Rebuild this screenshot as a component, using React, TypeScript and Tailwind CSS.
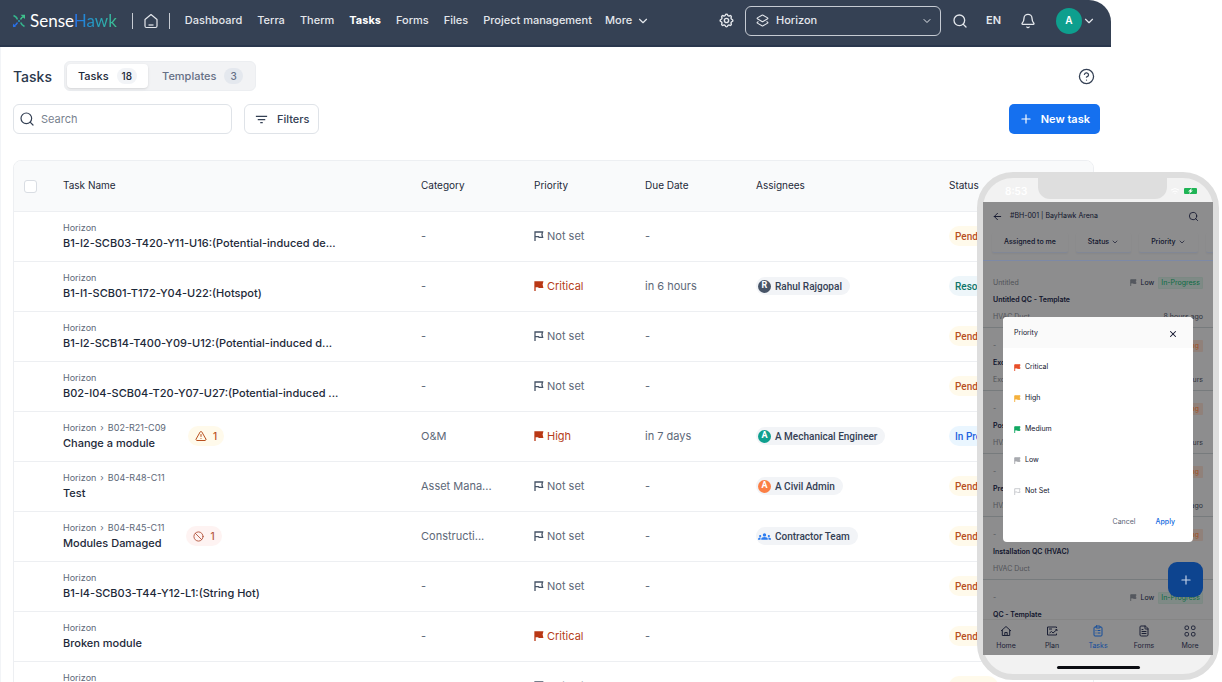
import { Fragment, ReactNode, useState } from 'react';
import {
  ArrowLeft,
  Ban,
  Bell,
  ChevronDown,
  CircleHelp,
  ClipboardList,
  FileText,
  Layers2,
  Plus,
  Search,
  TriangleAlert,
  X,
} from 'lucide-react';
import { MdFilterList, MdGroups } from 'react-icons/md';
import { TbSettings } from 'react-icons/tb';

type Status = 'Pending' | 'Resolved' | 'In Progress';
type Priority = 'Not set' | 'Critical' | 'High';

type Task = {
  id: number;
  path: string[];
  name: string;
  category?: string;
  priority: Priority;
  due?: string;
  assignee?: { name: string; color?: string };
  status: Status;
  alert?: 'warning' | 'blocked';
};

const TASKS: Task[] = [
  {
    id: 1,
    path: ['Horizon'],
    name: 'B1-I2-SCB03-T420-Y11-U16:(Potential-induced de...',
    priority: 'Not set',
    status: 'Pending',
  },
  {
    id: 2,
    path: ['Horizon'],
    name: 'B1-I1-SCB01-T172-Y04-U22:(Hotspot)',
    priority: 'Critical',
    due: 'in 6 hours',
    assignee: { name: 'Rahul Rajgopal', color: 'bg-[#475467]' },
    status: 'Resolved',
  },
  {
    id: 3,
    path: ['Horizon'],
    name: 'B1-I2-SCB14-T400-Y09-U12:(Potential-induced d...',
    priority: 'Not set',
    status: 'Pending',
  },
  {
    id: 4,
    path: ['Horizon'],
    name: 'B02-I04-SCB04-T20-Y07-U27:(Potential-induced ...',
    priority: 'Not set',
    status: 'Pending',
  },
  {
    id: 5,
    path: ['Horizon', 'B02-R21-C09'],
    name: 'Change a module',
    category: 'O&M',
    priority: 'High',
    due: 'in 7 days',
    assignee: { name: 'A Mechanical Engineer', color: 'bg-[#0e9f8e]' },
    status: 'In Progress',
    alert: 'warning',
  },
  {
    id: 6,
    path: ['Horizon', 'B04-R48-C11'],
    name: 'Test',
    category: 'Asset Mana...',
    priority: 'Not set',
    assignee: { name: 'A Civil Admin', color: 'bg-[#fb7f45]' },
    status: 'Pending',
  },
  {
    id: 7,
    path: ['Horizon', 'B04-R45-C11'],
    name: 'Modules Damaged',
    category: 'Constructi...',
    priority: 'Not set',
    assignee: { name: 'Contractor Team' },
    status: 'Pending',
    alert: 'blocked',
  },
  {
    id: 8,
    path: ['Horizon'],
    name: 'B1-I4-SCB03-T44-Y12-L1:(String Hot)',
    priority: 'Not set',
    status: 'Pending',
  },
  { id: 9, path: ['Horizon'], name: 'Broken module', priority: 'Critical', status: 'Pending' },
  { id: 10, path: ['Horizon'], name: 'Inspection', priority: 'Not set', status: 'Pending' },
];

const NAV = ['Dashboard', 'Terra', 'Therm', 'Tasks', 'Forms', 'Files', 'Project management'];

const STATUS_STYLES: Record<Status, string> = {
  Pending: 'bg-[#fffaeb] text-[#b9501f]',
  Resolved: 'bg-[#eef6fa] text-[#107569]',
  'In Progress': 'bg-[#eaf6ff] text-[#1d62e0]',
};

const MOBILE_TASKS = [
  { id: 1, path: 'Untitled', name: 'Untitled QC - Template', form: 'HVAC Duct', time: '8 hours ago', low: true },
  { id: 2, path: '-', name: 'Excavation', form: 'Excavation', time: 'in 8 hours' },
  { id: 3, path: '-', name: 'Post Installation', form: 'HVAC Duct', time: 'in 8 hours' },
  { id: 4, path: '-', name: 'Pre Installation', form: 'HVAC Duct', time: '1 day ago' },
  { id: 5, path: '-', name: 'Installation QC (HVAC)', form: 'HVAC Duct', time: '' },
  { id: 6, path: '-', name: 'QC - Template', form: '', time: '', low: true },
];

const PRIORITY_OPTIONS = [
  { label: 'Critical', color: 'text-[#e8502a]', filled: true },
  { label: 'High', color: 'text-[#f5b13d]', filled: true },
  { label: 'Medium', color: 'text-[#12a862]', filled: true },
  { label: 'Low', color: 'text-[#a9abb0]', filled: true },
  { label: 'Not Set', color: 'text-[#c5c7cb]', filled: false },
];

export default function App() {
  return (
    <div className="relative h-screen overflow-hidden bg-white font-['Inter','Noto_Sans',sans-serif] text-[#344054]">
      <div className="mr-[111px] flex flex-col">
        <TopBar />
        <main className="flex flex-col border-l border-[#f2f4f7] pt-[14px] pr-[11px] pl-3">
          <PageHeader />
          <Toolbar />
          <TaskTable />
        </main>
      </div>
      <Phone />
    </div>
  );
}

function TopBar() {
  return (
    <header className="flex h-[47px] items-center rounded-tr-[22px] border-b-2 border-[#2a374d] bg-[#354154] pr-[15px] pb-1 pl-3 text-[11px] font-medium text-[#e4e7ec]">
      <a href="#" className="flex items-center gap-1" aria-label="SenseHawk">
        <LogoMark />
        <span className="font-['Lato',sans-serif] text-[17px] leading-5 font-normal text-white">
          Sense
          <span className="bg-linear-to-r from-[#2970e8] to-[#3fc08c] bg-clip-text text-transparent">
            Hawk
          </span>
        </span>
      </a>
      <div className="ml-[15px] flex items-center gap-[11px]">
        <span className="h-4 w-px bg-[#c6cbd3]" />
        <a href="#" aria-label="Home">
          <HomeIcon />
        </a>
        <span className="h-4 w-px bg-[#c6cbd3]" />
      </div>
      <nav className="ml-[15px] flex items-center gap-[15px] whitespace-nowrap">
        {NAV.map((item) => (
          <a key={item} href="#" className={item === 'Tasks' ? 'font-bold text-white' : ''}>
            {item}
          </a>
        ))}
        <button className="-ml-[2px] flex items-center gap-1">
          More
          <ChevronDown size={14} />
        </button>
      </nav>

      <div className="ml-auto flex items-center">
        <button aria-label="Settings">
          <TbSettings size={17} strokeWidth={2} />
        </button>
        <div className="relative ml-[10px] flex h-[30px] w-[196px] items-center rounded-md border border-[#c6cbd3] pl-[10px]">
          <Layers2 size={13} />
          <select
            aria-label="Project"
            className="h-full flex-1 appearance-none bg-transparent pl-[7px] text-[11px] outline-none"
          >
            <option>Horizon</option>
          </select>
          <ChevronDown size={12} className="pointer-events-none absolute right-[7px]" />
        </div>
        <button className="ml-[11px]" aria-label="Search">
          <Search size={16} />
        </button>
        <button className="ml-[18px] text-[11px] font-semibold">EN</button>
        <button className="ml-[19px]" aria-label="Notifications">
          <Bell size={16} />
        </button>
        <button className="ml-5 flex items-center" aria-label="Account">
          <span className="flex size-[26px] items-center justify-center rounded-full bg-[#0e9f8e] text-[10px] font-semibold text-white">
            A
          </span>
          <ChevronDown size={14} />
        </button>
      </div>
    </header>
  );
}

function PageHeader() {
  return (
    <div className="flex items-center">
      <h1 className="text-[14px] font-medium text-[#2b384c]">Tasks</h1>
      <div className="ml-3 flex rounded-md border border-[#eceef1] bg-[#f2f3f5] p-[2px] text-[11px] font-medium">
        <button className="flex h-6 items-center gap-2 rounded-sm bg-white px-[11px] text-[#1d2939] shadow-sm">
          Tasks
          <span className="flex h-4 items-center rounded-full bg-[#f2f4f7] px-[5px] text-[10px]">18</span>
        </button>
        <button className="flex h-6 items-center gap-2 pr-[10px] pl-[14px] text-[#667085]">
          Templates
          <span className="flex h-4 items-center rounded-full bg-[#e4e8ee] px-[6px] text-[10px]">3</span>
        </button>
      </div>
      <button className="mr-[5px] ml-auto" aria-label="Help">
        <CircleHelp size={17} strokeWidth={1.8} />
      </button>
    </div>
  );
}

function Toolbar() {
  return (
    <div className="mt-[13px] flex items-center gap-3">
      <label className="flex h-[30px] w-[219px] items-center gap-[6px] rounded-md border border-[#dfe3e8] pl-[5px]">
        <Search size={16} strokeWidth={1.8} />
        <input
          type="text"
          aria-label="Search tasks"
          placeholder="Search"
          className="min-w-0 flex-1 text-[11px] outline-none placeholder:text-[#79828f]"
        />
      </label>
      <button className="flex h-[30px] items-center gap-2 rounded-md border border-[#dfe3e8] px-[9px] text-[11px] font-medium">
        <MdFilterList size={15} />
        Filters
      </button>
      <button className="ml-auto flex h-[30px] items-center gap-2 rounded-[5px] bg-[#1570ef] px-[10px] text-[11px] font-semibold text-white">
        <Plus size={14} />
        New task
      </button>
    </div>
  );
}

function TaskTable() {
  return (
    <div className="mt-[26px] mr-[6px] overflow-hidden rounded-t-lg border border-[#edeff2]">
      <table className="w-full table-fixed border-collapse text-left whitespace-nowrap">
        <colgroup>
          <col className="w-[49px]" />
          <col className="w-[358px]" />
          <col className="w-[113px]" />
          <col className="w-[111px]" />
          <col className="w-[111px]" />
          <col className="w-[193px]" />
          <col />
        </colgroup>
        <thead>
          <tr className="h-[50px] border-b border-[#edeff2] bg-[#f9fafb] text-[10px] text-[#1d2939]">
            <th className="pt-[2px] pl-[10px]">
              <input
                type="checkbox"
                aria-label="Select all"
                className="block size-[13px] appearance-none rounded-[3px] border border-[#d9dde3] bg-white"
              />
            </th>
            <th className="font-normal">Task Name</th>
            <th className="font-normal">Category</th>
            <th className="font-normal">Priority</th>
            <th className="font-normal">Due Date</th>
            <th className="font-normal">Assignees</th>
            <th className="font-normal">Status</th>
          </tr>
        </thead>
        <tbody>
          {TASKS.map((task) => (
            <TaskRow key={task.id} task={task} />
          ))}
        </tbody>
      </table>
    </div>
  );
}

function TaskRow({ task }: { task: Task }) {
  return (
    <tr className="h-[50px] border-b border-[#edeff2] text-[11px] text-[#5d6878]">
      <td />
      <td>
        <div className="flex items-center gap-[22px]">
          <div className="flex flex-col pb-[2px]">
            <span className="text-[9px] leading-[15px]">
              {task.path.map((part, index) => (
                <Fragment key={part}>
                  {index > 0 && <span className="mx-1">›</span>}
                  {part}
                </Fragment>
              ))}
            </span>
            <span className="leading-4 font-medium text-[#1d2939]">{task.name}</span>
          </div>
          {task.alert === 'warning' && (
            <Pill className="bg-[#fffaeb] text-[#b9501f]">
              <TriangleAlert size={12} />1
            </Pill>
          )}
          {task.alert === 'blocked' && (
            <Pill className="bg-[#fef3f2] text-[#b5573f]">
              <Ban size={11} />1
            </Pill>
          )}
        </div>
      </td>
      <td>{task.category || '-'}</td>
      <td>
        <span
          className={`flex items-center gap-[3px] ${task.priority === 'Not set' ? '' : 'text-[#b5401a]'}`}
        >
          <Flag
            size={10}
            filled={task.priority !== 'Not set'}
            className={task.priority === 'Not set' ? 'text-[#475467]' : 'text-[#b93815]'}
          />
          {task.priority}
        </span>
      </td>
      <td>{task.due || '-'}</td>
      <td>
        {task.assignee && (
          <span className="inline-flex h-[18px] items-center gap-1 rounded-full bg-[#f2f4f7] pr-2 pl-[2px] align-middle font-['Roboto',sans-serif] text-[10px] font-medium text-[#344054]">
            {task.assignee.color ? (
              <span
                className={`flex size-[13px] items-center justify-center rounded-full text-[9px] font-bold text-white ${task.assignee.color}`}
              >
                {task.assignee.name[0]}
              </span>
            ) : (
              <MdGroups size={13} className="text-[#2e7df0]" />
            )}
            {task.assignee.name}
          </span>
        )}
      </td>
      <td>
        <span
          className={`inline-flex h-5 items-center rounded-full px-[6px] align-middle font-['Roboto',sans-serif] text-[10px] font-medium ${STATUS_STYLES[task.status]}`}
        >
          {task.status}
        </span>
      </td>
    </tr>
  );
}

function Pill({ children, className }: { children: ReactNode; className: string }) {
  return (
    <span
      className={`flex h-5 items-center gap-[6px] rounded-full px-[7px] text-[10px] font-medium ${className}`}
    >
      {children}
    </span>
  );
}

// Mobile app preview that floats over the desktop page
function Phone() {
  return (
    <div className="absolute top-[172px] right-[3px] flex w-[242px] flex-col rounded-[36px] border-[6px] border-[#dedede] bg-[#f2f2f2] text-[7px] text-[#10142c]">
      <div className="flex h-6 items-center justify-between pt-[2px] pr-4 pl-[22px] font-semibold text-white">
        <span className="text-[10px] leading-[10px]">8:53</span>
        <span className="flex items-center gap-1">
          <svg width="22" height="8" viewBox="0 0 22 8" fill="none" stroke="#fff">
            <path d="M1 7V5M3 7V4M5 7V2" />
            <path d="M13 3q4-3 8 0M14.500 5q2.500-2 5 0M17 7v-1" />
          </svg>
          <svg width="13" height="6" viewBox="0 0 13 6">
            <rect width="13" height="6" rx="1" fill="#1fb455" />
            <path d="M8 0 4 3.500H6L5 6 9 2.500H7z" fill="#fff" />
          </svg>
        </span>
      </div>
      <div className="absolute -top-px left-[55px] h-[22px] w-[129px] rounded-b-xl bg-[#dedede]" />

      <div className="relative flex h-[453px] flex-col overflow-hidden bg-[#8d8d8e]">
        <div className="flex h-[27px] items-center px-[9px] pt-px">
          <button aria-label="Back">
            <ArrowLeft size={11} />
          </button>
          <span className="ml-[7px]">#BH-001 | BayHawk Arena</span>
          <button className="mr-[5px] ml-auto" aria-label="Search">
            <Search size={11} strokeWidth={1.8} />
          </button>
        </div>
        <div className="flex h-8 items-center gap-2 border-b border-[#7d89a6] px-[9px] pb-1 font-medium whitespace-nowrap">
          <MobileChip>Assigned to me</MobileChip>
          <MobileChip arrow>Status</MobileChip>
          <MobileChip arrow>Priority</MobileChip>
          <MobileChip arrow>Due Date</MobileChip>
        </div>
        <ul className="mt-1 flex min-h-0 flex-1 flex-col overflow-hidden">
          {MOBILE_TASKS.map((task) => (
            <MobileTask key={task.id} task={task} />
          ))}
        </ul>
        <nav className="flex h-9 items-center border-t border-[#858585] leading-[9px]">
          <MobileTab label="Home">
            <HomeTabIcon />
          </MobileTab>
          <MobileTab label="Plan">
            <PlanIcon />
          </MobileTab>
          <MobileTab label="Tasks" active>
            <ClipboardList size={12} />
          </MobileTab>
          <MobileTab label="Forms">
            <FileText size={12} />
          </MobileTab>
          <MobileTab label="More">
            <DotsIcon />
          </MobileTab>
        </nav>
        <button
          className="absolute right-[10px] bottom-[58px] flex size-[35px] items-center justify-center rounded-[9px] bg-[#0d448f] text-[#c5d3e8]"
          aria-label="Add task"
        >
          <Plus size={14} />
        </button>
        <PriorityDialog />
      </div>

      <div className="flex h-[19px] items-center justify-center pt-[6px]">
        <span className="h-[3px] w-[83px] rounded-full bg-[#0b0d12]" />
      </div>
    </div>
  );
}

function MobileChip({ children, arrow }: { children: ReactNode; arrow?: boolean }) {
  return (
    <button className="flex h-5 shrink-0 items-center gap-[2px] rounded-[2px] border-b border-[#818795] px-3 shadow-xs">
      {children}
      {arrow && <ChevronDown size={8} />}
    </button>
  );
}

function MobileTask({ task }: { task: (typeof MOBILE_TASKS)[number] }) {
  return (
    <li className="flex h-[63px] shrink-0 flex-col border-b border-[#777b7d] px-[10px] pt-[9px] leading-[17px]">
      <div className="flex items-center text-[#505257]">
        {task.path}
        {task.low ? (
          <span className="ml-auto flex items-center gap-1 text-[#10142c]">
            <Flag size={7} filled className="text-[#55585f]" />
            Low
            <span className="rounded-[1px] border border-[#7b8983] bg-[#7f8a86] px-[2px] leading-[10px] text-[#0a6a42]">
              In-Progress
            </span>
          </span>
        ) : (
          <span className="ml-auto rounded-[1px] bg-[#90817a] px-[4px] leading-3 text-[#a04f1e]">
            Pending
          </span>
        )}
      </div>
      <div className="font-semibold">{task.name}</div>
      <div className="flex justify-between text-[#505257]">
        {task.form}
        <span className="text-[#2c2f3a]">{task.time}</span>
      </div>
    </li>
  );
}

function MobileTab({
  children,
  label,
  active,
}: {
  children: ReactNode;
  label: string;
  active?: boolean;
}) {
  return (
    <button
      className={`flex flex-1 flex-col items-center gap-1 ${active ? 'text-[#124c9c]' : 'text-[#1c2136]'}`}
    >
      {children}
      {label}
    </button>
  );
}

function PriorityDialog() {
  const [selected, setSelected] = useState('');

  return (
    <div
      role="dialog"
      aria-label="Priority"
      className="absolute inset-x-5 top-[115px] flex flex-col overflow-hidden rounded-sm bg-white"
    >
      <div className="flex h-[31px] items-center justify-between bg-[#fafafa] pt-[2px] pr-[15px] pl-[11px]">
        Priority
        <button aria-label="Close">
          <X size={10} strokeWidth={2.5} />
        </button>
      </div>
      <div className="mt-1 flex flex-col">
        {PRIORITY_OPTIONS.map((option) => (
          <button
            key={option.label}
            className={`flex h-[31px] items-center gap-1 pl-[11px] ${
              selected === option.label ? 'bg-gray-100' : ''
            }`}
            onClick={() => setSelected(option.label)}
          >
            <Flag size={7} filled={option.filled} className={option.color} />
            {option.label}
          </button>
        ))}
      </div>
      <div className="flex h-[35px] items-center justify-end gap-5 pr-[18px] pb-1">
        <button className="text-[#5b6475]">Cancel</button>
        <button className="font-medium text-[#0f6ae0]">Apply</button>
      </div>
    </div>
  );
}

function Flag({ size, filled, className }: { size: number; filled?: boolean; className: string }) {
  return (
    <svg
      width={size}
      height={size}
      viewBox="0 0 10 10"
      fill={filled ? 'currentColor' : 'none'}
      stroke="currentColor"
      strokeWidth="1.3"
      className={className}
    >
      <path d="M1 10V1H8.600L7.900 3.500L8.600 6.300H5L4.500 5.700H1" />
    </svg>
  );
}

function LogoMark() {
  return (
    <svg width="14" height="14" viewBox="0 0 14 14" fill="none" strokeWidth="1.6">
      <path d="M1.500 1.500Q5 3 5.300 5.500M8.700 8.500Q9.500 11 12.500 12.500" stroke="#35b58d" />
      <path d="M1 12.500Q4.500 11 5.500 8.500" stroke="#2970e8" />
      <path d="M8.500 5.500Q9.500 3 12 2.500" stroke="#3fc08c" />
      <path d="M8.500 .800H13V5z" fill="#3fc08c" />
      <path d="M1 9.500V13H4z" fill="#2970e8" />
      <circle cx="7" cy="7" r="1" fill="#2f9bb8" />
    </svg>
  );
}

function HomeIcon() {
  return (
    <svg width="14" height="16" viewBox="0 0 14 16" fill="none" stroke="currentColor" strokeWidth="1.2">
      <path d="M1 6.500 7 1.500 13 6.500V13Q13 14.500 11.500 14.500H2.500Q1 14.500 1 13Z" strokeLinejoin="round" />
      <path d="M4.500 12H9.500" />
    </svg>
  );
}

function HomeTabIcon() {
  return (
    <svg width="12" height="12" viewBox="0 0 12 12" fill="none" stroke="currentColor">
      <path d="M1 6 6 1.500 11 6M2.300 5V10.500H9.700V5M4.800 10.500V7.500H7.200V10.500" />
    </svg>
  );
}

function PlanIcon() {
  return (
    <svg width="12" height="12" viewBox="0 0 12 12" fill="none" stroke="currentColor">
      <path d="M10.500 3V2H1.500V10H10.500V8.500M3 4H6M3.500 8 5.500 6.500 7 8 11 4.500M9.500 4.500H11V6" />
    </svg>
  );
}

function DotsIcon() {
  return (
    <svg width="12" height="12" viewBox="0 0 12 12" fill="none" stroke="currentColor">
      <rect x="1" y="1" width="3.500" height="3.500" rx="1.200" />
      <rect x="7.500" y="1" width="3.500" height="3.500" rx="1.200" />
      <rect x="1" y="7.500" width="3.500" height="3.500" rx="1.200" />
      <rect x="7.500" y="7.500" width="3.500" height="3.500" rx="1.200" />
    </svg>
  );
}
